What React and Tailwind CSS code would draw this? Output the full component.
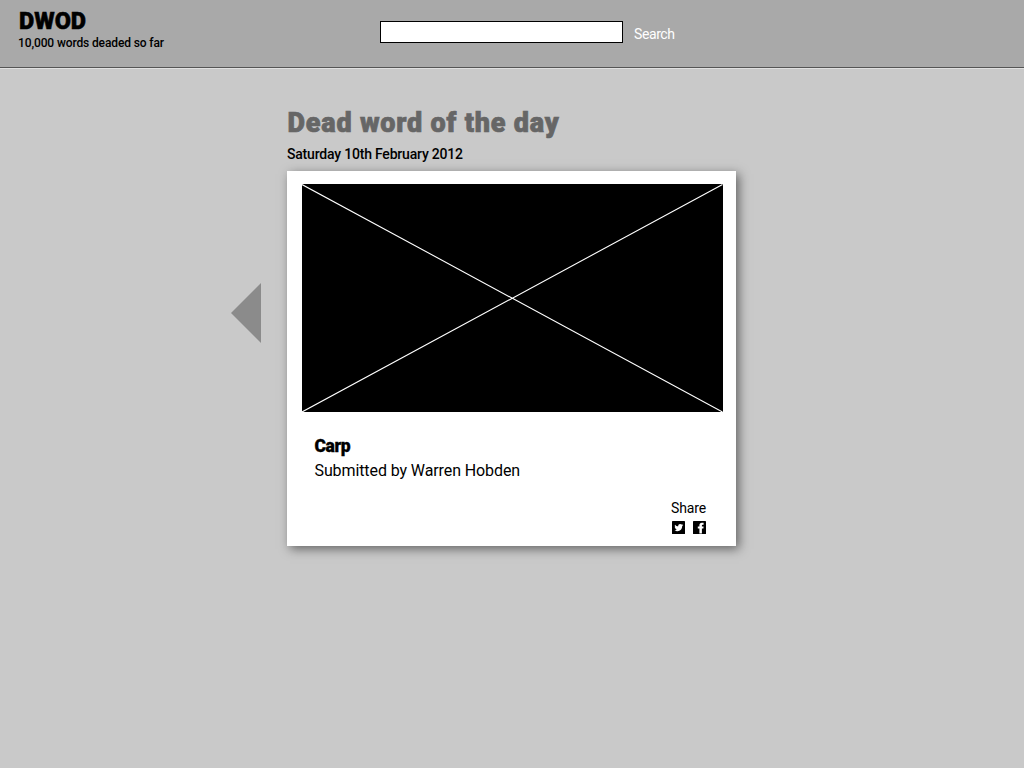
function TwitterIcon() {
  return (
    <svg width="13" height="13" viewBox="0 0 13 13" role="img" aria-label="Twitter">
      <rect width="13" height="13" rx="0.6" fill="#000" />
      <path
        d="M3.1 3.7C3.9 4.7 5 5.2 6.2 5.2C6.1 3.7 7 2.9 8.1 2.9C8.7 2.9 9.2 3.1 9.5 3.5L10.8 3.1L10.2 4.1L11.2 4L10.2 5C10.2 8 8.3 10.2 5.4 10.2C4.3 10.2 3.3 9.9 2.5 9.4C3.4 9.4 4.2 9.1 4.8 8.7C4 8.6 3.5 8.1 3.2 7.5L4 7.4C3.2 7.1 2.7 6.4 2.7 5.7L3.4 5.9C2.7 5.3 2.6 4.5 3.1 3.7Z"
        fill="#fff"
      />
    </svg>
  );
}

function FacebookIcon() {
  return (
    <svg width="13" height="13" viewBox="0 0 13 13" role="img" aria-label="Facebook">
      <rect width="13" height="13" rx="0.6" fill="#000" />
      <path
        d="M6.4 12.5V7.5H4.8V5.4H6.4V4.2C6.4 2.7 7.3 1.8 8.9 1.8H10.6V3.8H9.6C9.1 3.8 8.9 4 8.9 4.5V5.4H10.6L10.4 7.5H8.9V12.5Z"
        fill="#fff"
      />
    </svg>
  );
}

function Header() {
  return (
    <header className="flex h-[68px] border-b border-[#555] bg-[#a9a9a9] shadow-[0_1px_0_#e0e0e0]">
      <div className="w-[380px] pt-[9px] pl-[18px]">
        <h1 className="pl-px text-[23.5px] leading-6 font-black [-webkit-text-stroke:0.5px_currentColor]">DWOD</h1>
        <p className="mt-0.5 text-[12px] leading-4 font-medium tracking-[-0.12px] whitespace-nowrap">10,000 words deaded so far</p>
      </div>
      <form className="flex items-start" onSubmit={(e) => e.preventDefault()}>
        <input aria-label="Search words" className="mt-[21px] h-[22px] w-[243px] border border-black bg-white px-1 text-sm outline-none" />
        <button className="mt-6 ml-[11px] text-[14px] leading-5 tracking-[-0.4px] text-white">Search</button>
      </form>
    </header>
  );
}

function Card() {
  return (
    <article className="flex h-[375px] w-[449px] flex-col bg-white pt-[13px] pl-[15px] shadow-[3px_3px_10px_rgba(0,0,0,0.5)]">
      <svg width="421" height="228" viewBox="0 0 421 228" className="shrink-0 bg-black">
        <path d="M0 0.5L420.5 228M0 228L420.5 0.5" stroke="#fff" strokeWidth="1.1" />
      </svg>
      <div className="mt-[22px] pl-[12.5px]">
        <h3 className="text-[17.5px] leading-6 font-black tracking-[-0.4px] [-webkit-text-stroke:0.3px_currentColor]">Carp</h3>
        <p className="mt-px text-[16px] leading-6 tracking-[-0.1px]">Submitted by Warren Hobden</p>
      </div>
      <div className="mt-[15px] ml-[369px]">
        <p className="text-[14px] leading-5 tracking-[-0.15px]">Share</p>
        <div className="mt-[3px] flex gap-2 pl-px">
          <TwitterIcon />
          <FacebookIcon />
        </div>
      </div>
    </article>
  );
}

export default function App() {
  return (
    <div className="min-h-screen bg-[#c9c9c9] font-['Roboto',sans-serif] text-black">
      <Header />
      <main className="flex pt-[39px] pl-[231px]">
        <button aria-label="Previous word" className="mt-[176px] h-[60px] w-[30px]">
          <svg width="30" height="60" viewBox="0 0 30 60">
            <path d="M30 0V60L0 30Z" fill="#8b8b8b" />
          </svg>
        </button>
        <section className="ml-[26px]">
          <h2 className="pl-[0.5px] text-[27px] leading-8 font-black tracking-[0.8px] text-[#666] [-webkit-text-stroke:0.7px_currentColor]">
            Dead word of the day
          </h2>
          <p className="mt-[5px] mb-[7px] text-[14px] leading-5 font-medium tracking-[-0.2px]">Saturday 10th February 2012</p>
          <Card />
        </section>
      </main>
    </div>
  );
}
